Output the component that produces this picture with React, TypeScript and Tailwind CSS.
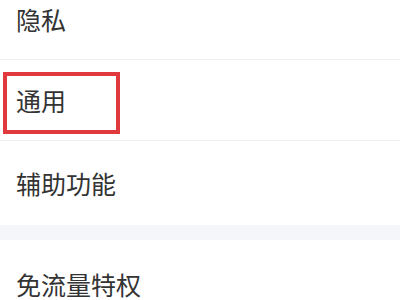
import React from 'react';

const rowText = "text-[25px] leading-none text-[#333333]";

function Row({ label, height, border = true, children }: { label: string; height: string; border?: boolean; children?: React.ReactNode }) {
  return (
    <div className={`relative flex items-center pl-4 ${height} ${border ? 'border-b border-[#f0f0f2]' : ''}`}>
      <span className={rowText}>{label}</span>
      {children}
    </div>
  );
}

export default function App() {
  return (
    <div
      className="w-[400px] h-[300px] overflow-hidden bg-white"
      style={{ fontFamily: '"Noto Sans CJK SC", "Noto Sans", sans-serif' }}
    >
      <div className="-mt-[20px] flex flex-col">
        <Row label="隐私" height="h-[80px]" />
        <Row label="通用" height="h-[81px]">
          {/* highlight annotation */}
          <div className="absolute left-[3px] top-[12px] w-[117px] h-[62px] border-[4px] border-[#e03a3e]" />
        </Row>
        <Row label="辅助功能" height="h-[84px]" border={false} />
        <div className="h-[15px] bg-[#f5f6f9]" />
        <Row label="免流量特权" height="h-[88px]" border={false} />
      </div>
    </div>
  );
}
